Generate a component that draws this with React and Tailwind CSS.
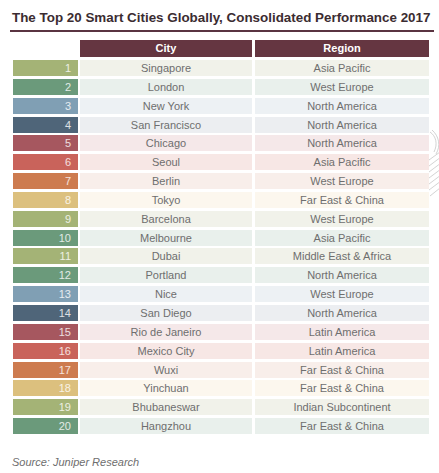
import React from "react";

const palette = {
  olive: { c: "bg-[#a4b376]", r: "bg-[#f1f2ea]" },
  green: { c: "bg-[#6b9a7b]", r: "bg-[#e9f0ec]" },
  blue: { c: "bg-[#809fb4]", r: "bg-[#edf1f4]" },
  slate: { c: "bg-[#4f6579]", r: "bg-[#eceef1]" },
  rose: { c: "bg-[#a6575f]", r: "bg-[#f5e8e9]" },
  red: { c: "bg-[#c9635b]", r: "bg-[#f7e7e5]" },
  orange: { c: "bg-[#cd7b4f]", r: "bg-[#f8eeea]" },
  tan: { c: "bg-[#dcc07e]", r: "bg-[#fcf7ee]" },
};

const rows = [
  ["Singapore", "Asia Pacific", "olive"],
  ["London", "West Europe", "green"],
  ["New York", "North America", "blue"],
  ["San Francisco", "North America", "slate"],
  ["Chicago", "North America", "rose"],
  ["Seoul", "Asia Pacific", "red"],
  ["Berlin", "West Europe", "orange"],
  ["Tokyo", "Far East & China", "tan"],
  ["Barcelona", "West Europe", "olive"],
  ["Melbourne", "Asia Pacific", "green"],
  ["Dubai", "Middle East & Africa", "olive"],
  ["Portland", "North America", "green"],
  ["Nice", "West Europe", "blue"],
  ["San Diego", "North America", "slate"],
  ["Rio de Janeiro", "Latin America", "rose"],
  ["Mexico City", "Latin America", "red"],
  ["Wuxi", "Far East & China", "orange"],
  ["Yinchuan", "Far East & China", "tan"],
  ["Bhubaneswar", "Indian Subcontinent", "olive"],
  ["Hangzhou", "Far East & China", "green"],
];

export default function App() {
  return (
    <div className="relative w-[439px] h-[473px] bg-white overflow-hidden font-['Liberation_Sans',Arial,sans-serif]">
      <div className="pt-[10px] pl-[12px] text-[13.4px] leading-[16px] font-bold text-[#3b2c31] whitespace-nowrap">
        The Top 20 Smart Cities Globally, Consolidated Performance 2017
      </div>
      <div className="mt-[4px] ml-[10px] w-[424px] h-[2px] bg-[#5a3441]" />
      <div className="mt-[8px] ml-[13px] flex flex-col">
        <div className="flex h-[17px]">
          <div className="w-[65px]" />
          <div className="ml-[2px] w-[172px] bg-[#653641] text-white font-bold text-[11px] flex items-center justify-center">
            City
          </div>
          <div className="ml-[3px] w-[174px] bg-[#653641] text-white font-bold text-[11px] flex items-center justify-center">
            Region
          </div>
        </div>
        <div className="mt-[3px] flex flex-col gap-[2.85px]">
          {rows.map(([city, region, key], i) => {
            const p = palette[key];
            return (
              <div key={i} className="flex h-[16px] text-[11px] leading-[16px]">
                <div className={`w-[65px] ${p.c} text-white/80 text-right pr-[7px]`}>{i + 1}</div>
                <div className={`ml-[2px] w-[172px] ${p.r} text-[#6e6e6e] text-center`}>{city}</div>
                <div className={`ml-[3px] w-[174px] ${p.r} text-[#6e6e6e] text-center`}>{region}</div>
              </div>
            );
          })}
        </div>
      </div>
      <div className="mt-[21px] pl-[12px] italic text-[11px] leading-[14px] text-[#6e6e6e]">
        Source: Juniper Research
      </div>
      <svg className="absolute left-[428px] top-[130px]" width="14" height="72" viewBox="0 0 14 72" fill="none" stroke="#c8c8c8" strokeWidth="0.8">
        <path d="M2 2 C8 6 10 14 6 22" />
        <path d="M4 0 C11 6 13 16 8 24" />
        <path d="M1 30 L12 22" />
        <path d="M1 36 L13 27" />
        <path d="M1 42 L13 33" />
        <path d="M1 48 L13 39" />
        <path d="M1 54 L13 45" />
        <path d="M1 60 L13 51" />
        <path d="M2 66 L12 58" />
      </svg>
    </div>
  );
}
